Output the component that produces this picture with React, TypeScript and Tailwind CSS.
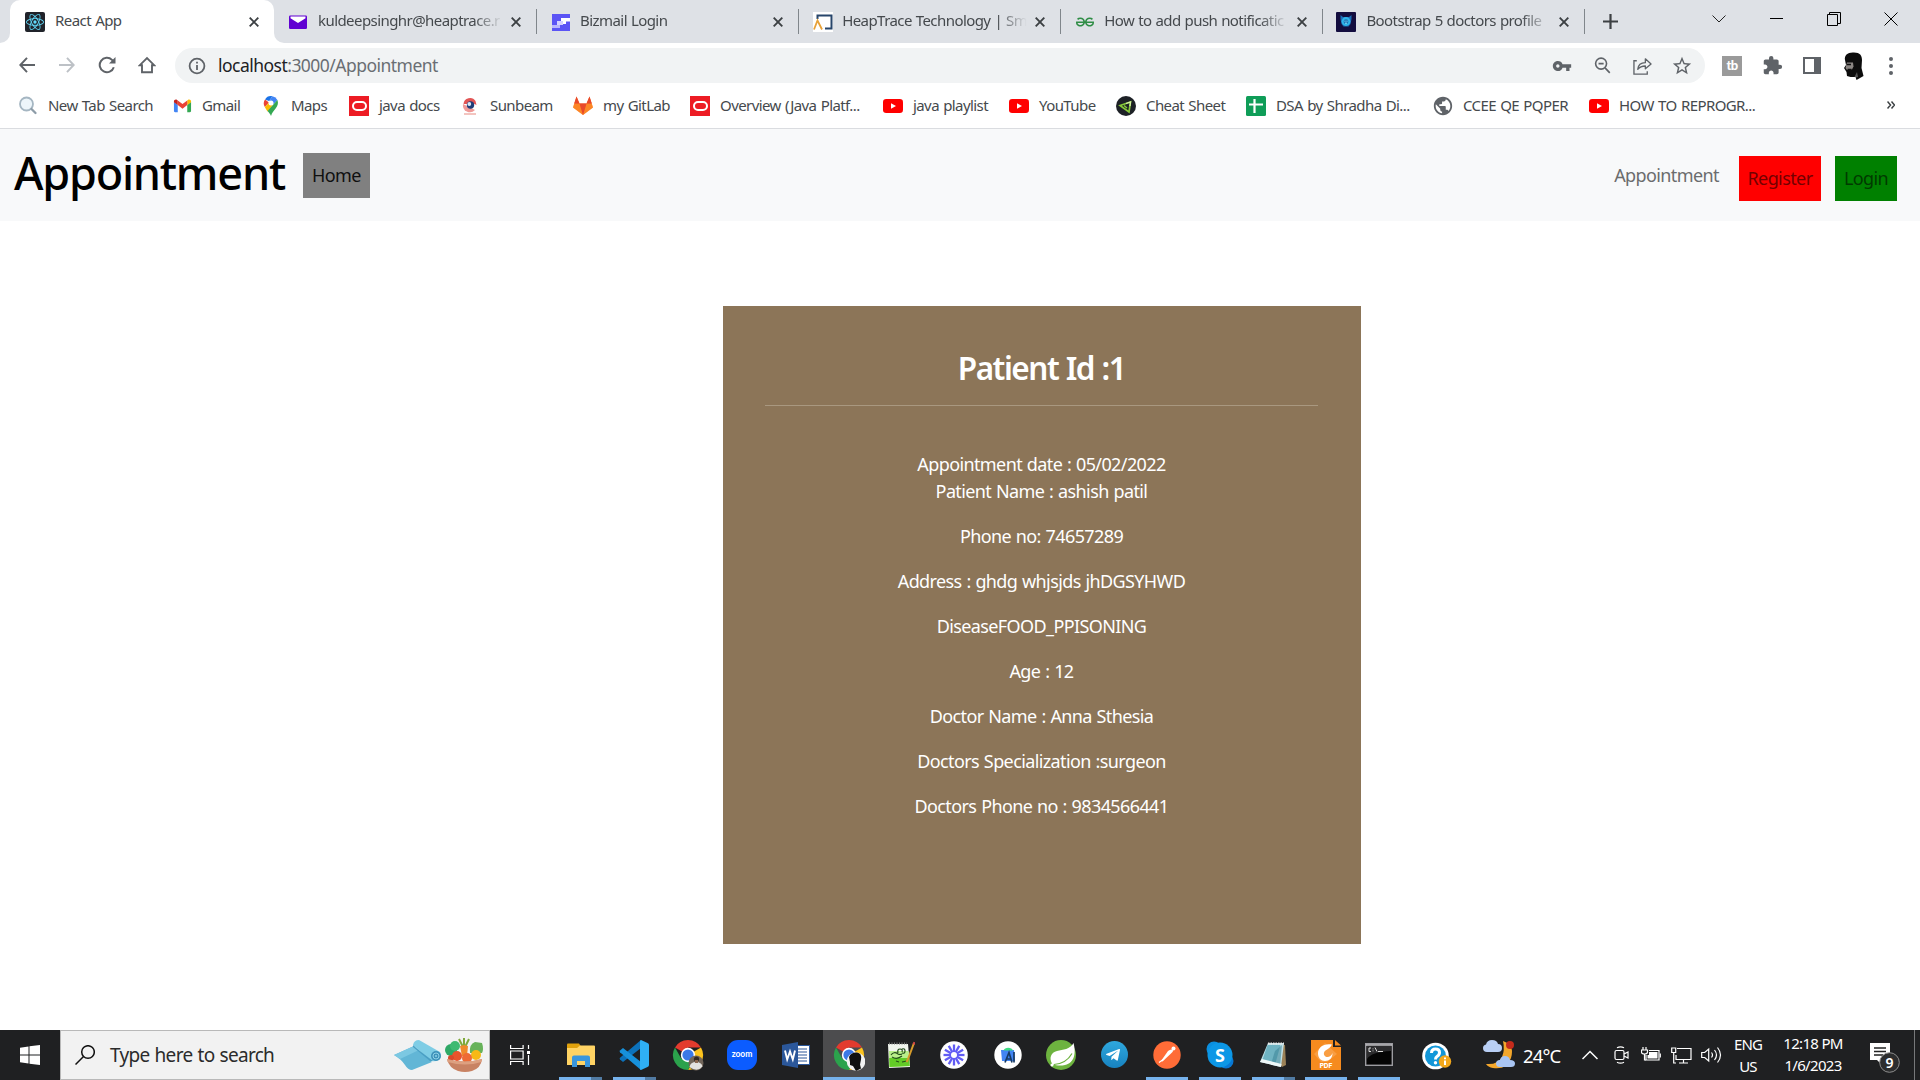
import type { ReactNode } from 'react';
import { SiReact, SiGeeksforgeeks } from 'react-icons/si';
import { FaTelegramPlane } from 'react-icons/fa';
import { MdVpnKey, MdExtension, MdStarBorder, MdPublic } from 'react-icons/md';

/* ---------- favicons ---------- */

const ReactFav = () => (
  <span className="flex size-5 items-center justify-center rounded-[2px] bg-[#20232a] text-[#61dafb]">
    <SiReact className="size-[18px]" />
  </span>
);

const MailFav = () => (
  <svg className="size-5" viewBox="0 0 20 20">
    <rect x="1" y="3.5" width="18" height="13.5" rx="1.2" fill="#6001d2" />
    <path d="M2.5 4.5h15v1.8L10 11 2.5 6.300z" fill="#fff" />
  </svg>
);

const BizmailFav = () => (
  <svg className="ml-px size-5" viewBox="0 0 20 20">
    <rect x="1" y="2" width="18" height="17" fill="#5b54f5" />
    <path d="M10 6h9v3.500h-4V12h-5z" fill="#fff" />
    <path d="M6 9h6v4H6z" fill="#d4d1ff" />
    <path d="M1 13h8v3H1z" fill="#b9b5fc" />
  </svg>
);

const HeapFav = () => (
  <svg className="ml-px size-5" viewBox="0 0 20 20">
    <rect width="20" height="20" fill="#fff" />
    <path d="M4.500 7V3.500h14V16.500H12" fill="none" stroke="#27456b" strokeWidth="2" />
    <path d="M1 17.500 4.500 8.500 9 17.500" fill="none" stroke="#e7a23a" strokeWidth="1.800" />
  </svg>
);

const BootFav = () => (
  <svg className="size-5" viewBox="0 0 20 20">
    <rect width="20" height="20" rx="1" fill="#130d3f" />
    <path d="M4.500 3l2.500 2h6l2.500-2v4l-1 5-2 2.500H7.500L5.500 12l-1-5z" fill="#1d6fb8" />
    <circle cx="10" cy="9.500" r="4.400" fill="#2fb4ea" />
    <circle cx="10" cy="9.700" r="2.400" fill="#1b6fb5" />
    <path d="M8.500 9.200h1M10.500 9.200h1M9 11.200h2" stroke="#8fe6ff" strokeWidth="1" />
  </svg>
);

const SearchFav = () => (
  <svg className="size-5" viewBox="0 0 20 20" fill="none">
    <circle cx="8.500" cy="8" r="6.500" fill="#edf5fa" stroke="#a5b6c2" strokeWidth="1.800" />
    <path d="M13.500 13l4 4" stroke="#8d9ca8" strokeWidth="2.300" strokeLinecap="round" />
  </svg>
);

const GmailFav = () => (
  <svg className="ml-px size-5" viewBox="0 0 20 20">
    <path d="M1 5.500v9.800c0 .7.500 1.200 1.200 1.200H5V9z" fill="#4285f4" />
    <path d="M19 5.500v9.800c0 .7-.5 1.200-1.200 1.200H15V9z" fill="#34a853" />
    <path d="M1 5.200C1 3.500 3 2.700 4.300 3.700L5 4.200V9L1 6z" fill="#c5221f" />
    <path d="M19 5.200c0-1.700-2-2.500-3.300-1.500l-.7.500V9l4-3z" fill="#fbbc04" />
    <path d="M5 4.200l5 3.800 5-3.800V9l-5 3.800L5 9z" fill="#ea4335" />
  </svg>
);

const MapsFav = () => (
  <svg className="size-5" viewBox="0 0 20 20">
    <path d="M4 3.500A7 7 0 0 1 11.500.300L8 5z" fill="#1a73e8" />
    <path d="M4 3.500 8 6.500 3.800 11A7 7 0 0 1 4 3.500z" fill="#ea4335" />
    <path d="M11.500.3A7 7 0 0 1 16.400 4L12 9 8 5z" fill="#4285f4" />
    <path d="M3.800 11 8 6.500 12 9l-5.500 6.500C5.500 14 4.600 12.700 3.800 11z" fill="#fbbc04" />
    <path d="M16.400 4c1.200 3 .4 5.600-1.600 8.200C12.500 15 11 16.500 10 20c-.8-2.200-1.800-3-3.500-5z" fill="#34a853" />
    <circle cx="10" cy="7" r="2.500" fill="#fff" />
  </svg>
);

const OracleFav = () => (
  <span className="flex size-5 items-center justify-center bg-[#ed1c24]">
    <span className="h-[10px] w-[15px] rounded-full border-2 border-white" />
  </span>
);

const SunbeamFav = () => (
  <svg className="size-5" viewBox="0 0 20 20">
    <path d="M3.500 8a6.500 6.500 0 0 1 12-3l1 4-4-2-5 1z" fill="#e25454" />
    <path d="M3 8a7 7 0 0 0 12 6L9 11z" fill="#ef9a98" />
    <circle cx="10.500" cy="9" r="3.700" fill="#1f3d78" />
    <circle cx="9.300" cy="8" r="1.900" fill="#dbe6f5" />
    <path d="M4 18h12" stroke="#f0b6b0" strokeWidth="1.600" />
  </svg>
);

const GitlabFav = () => (
  <svg className="size-[22px] -mx-px" viewBox="0 0 22 22">
    <path d="M11 20 1 12.500 4.500 1.500 7.500 8.500h7l3-7L21 12.500z" fill="#fc6d26" />
    <path d="M11 20 1 12.500l1.200-4 5.300 0zM11 20l10-7.500-1.200-4-5.300 0z" fill="#fca326" opacity=".45" />
    <path d="M11 20 7.500 8.500h7zM4.500 1.500l3 7H2.200zM17.500 1.500l-3 7h5.300z" fill="#e8492a" />
  </svg>
);

const YoutubeFav = () => (
  <svg className="size-5" viewBox="0 0 20 20">
    <rect y="3" width="20" height="14" rx="3.200" fill="#f00" />
    <path d="M8 7.200v5.600l5-2.800z" fill="#fff" />
  </svg>
);

const CheatFav = () => (
  <svg className="size-5" viewBox="0 0 20 20">
    <circle cx="10" cy="10" r="10" fill="#1d2126" />
    <path d="M4 9.500 14.500 6 13 16z" fill="none" stroke="#86c93a" strokeWidth="1.700" />
    <path d="M8 9.500l3 2.500" stroke="#86c93a" strokeWidth="1.500" />
    <path d="M10 7.500 14.500 6 14 10" fill="none" stroke="#d6f0a5" strokeWidth="1.300" />
  </svg>
);

const SheetFav = () => (
  <svg className="size-5" viewBox="0 0 20 20">
    <rect width="20" height="20" rx="1.500" fill="#0f9d58" />
    <path d="M8.500 3v14M3 8.500h14" stroke="#fff" strokeWidth="2.200" />
  </svg>
);

/* ---------- browser chrome ---------- */

const CloseX = () => (
  <svg className="size-[10px] shrink-0" viewBox="0 0 10 10" stroke="#3c4043" strokeWidth="1.900">
    <path d="M.7.7l8.600 8.600M9.300.7L.7 9.300" />
  </svg>
);

const tabs: { icon: ReactNode; title: string }[] = [
  { icon: <MailFav />, title: 'kuldeepsinghr@heaptrace.r' },
  { icon: <BizmailFav />, title: 'Bizmail Login' },
  { icon: <HeapFav />, title: 'HeapTrace Technology | Sm' },
  { icon: <SiGeeksforgeeks className="ml-[2px] mt-px size-[18px] text-[#2f8d46]" />, title: 'How to add push notificatic' },
  { icon: <BootFav />, title: 'Bootstrap 5 doctors profile' },
];

const TabStrip = () => (
  <div className="flex h-[43px] shrink-0 bg-[#dee1e6] text-[15px] text-[#45494d]">
    <div className="flex w-[10px] items-end">
      <div className="size-[10px] bg-white">
        <div className="size-full rounded-br-[10px] bg-[#dee1e6]" />
      </div>
    </div>
    <div className="flex w-[264px] items-center rounded-t-[10px] bg-white pl-[15px] pr-[15px]">
      <ReactFav />
      <span className="mb-[2px] ml-[10px] flex-1 tracking-[-0.037em] [word-spacing:0.05em]">React App</span>
      <CloseX />
    </div>
    <div className="flex w-[10px] items-end">
      <div className="size-[10px] bg-white">
        <div className="size-full rounded-bl-[10px] bg-[#dee1e6]" />
      </div>
    </div>
    {tabs.map((t, i) => (
      <div key={i} className="flex w-[262.100px] shrink-0 items-center pl-[4px]">
        <span className="size-5 shrink-0">{t.icon}</span>
        <span className="mb-[2px] ml-[10px] w-[185px] shrink-0 whitespace-nowrap tracking-[-0.038em] [mask-image:linear-gradient(to_right,black_84%,transparent)] [word-spacing:0.04em]">
          {t.title}
        </span>
        <span className="ml-[8px]">
          <CloseX />
        </span>
        <span className="ml-[15px] h-[25px] w-px shrink-0 bg-[#80868b]" />
      </div>
    ))}
    <div className="flex w-[24px] items-center justify-end">
      <svg className="size-[15px]" viewBox="0 0 15 15" stroke="#3c4043" strokeWidth="2.200">
        <path d="M7.500 0v15M0 7.500h15" />
      </svg>
    </div>
    <div className="ml-auto flex h-[37px] w-[230px] items-center">
      <span className="flex w-[58px] justify-center">
        <svg className="h-2 w-[14px]" viewBox="0 0 14 8" fill="none" stroke="#222" strokeWidth="1">
          <path d="M.5.500 7 7l6.500-6.500" />
        </svg>
      </span>
      <span className="flex w-[57px] justify-center">
        <span className="h-px w-[13px] bg-black" />
      </span>
      <span className="flex w-[57px] justify-center">
        <svg className="size-[14px]" viewBox="0 0 14 14" fill="none" stroke="#000" strokeWidth="1">
          <path d="M.5 2.500h10v11H.5zM2.500 2.500v-2h11V11.500h-3" />
        </svg>
      </span>
      <span className="flex w-[57px] justify-center">
        <svg className="size-[14px]" viewBox="0 0 14 14" stroke="#000" strokeWidth="1">
          <path d="M.5.5l13 13M13.500.5L.5 13.500" />
        </svg>
      </span>
    </div>
  </div>
);

const Slot = ({ children, className = '' }: { children: ReactNode; className?: string }) => (
  <span className={`flex w-10 shrink-0 items-center justify-center ${className}`}>{children}</span>
);

const Toolbar = () => (
  <div className="flex h-[45px] shrink-0 items-center bg-white pl-[7px]">
    <Slot className="pb-[2px]">
      <svg className="size-4" viewBox="0 0 18 18" fill="none" stroke="#5f6368" strokeWidth="2.200">
        <path d="M18 9H2M9 1 1.500 9 9 17" />
      </svg>
    </Slot>
    <Slot className="pb-[2px]">
      <svg className="size-4" viewBox="0 0 18 18" fill="none" stroke="#bdc1c6" strokeWidth="2.200">
        <path d="M0 9H16M9 1 16.500 9 9 17" />
      </svg>
    </Slot>
    <Slot className="pb-px">
      <svg className="size-[18px]" viewBox="0 0 18 18" fill="none" stroke="#5f6368" strokeWidth="2">
        <path d="M15.800 11.200A7.200 7.200 0 1 1 14 3.900L16 6" />
        <path d="M17.500 1v6.500H11z" fill="#5f6368" stroke="none" />
      </svg>
    </Slot>
    <Slot className="pb-px">
      <svg className="size-[18px]" viewBox="0 0 18 18" fill="none" stroke="#5f6368" strokeWidth="1.900">
        <path d="M1.800 9.200H4v7h10v-7h2.200L9 2z" />
      </svg>
    </Slot>
    <div className="ml-[8px] flex h-[35px] w-[1530px] items-center rounded-full bg-[#f1f3f4] pl-[13px]">
      <svg className="size-[18px]" viewBox="0 0 18 18" fill="none" stroke="#5f6368" strokeWidth="1.800">
        <circle cx="9" cy="9" r="7.400" />
        <path d="M9 8v5M9 4.700v1.900" />
      </svg>
      <span className="ml-[12px] flex-1 text-[17.500px] tracking-[-0.030em] text-[#6a6e73]">
        <span className="text-[#202124]">localhost</span>:3000/Appointment
      </span>
      <Slot>
        <MdVpnKey className="size-[20px] text-[#5f6368]" />
      </Slot>
      <Slot>
        <svg className="size-[17px]" viewBox="0 0 18 18" fill="none" stroke="#5f6368" strokeWidth="1.700">
          <circle cx="7.500" cy="7" r="5.800" />
          <path d="M11.700 11.500l5 5.300M4.800 7h5.400" />
        </svg>
      </Slot>
      <Slot>
        <svg className="ml-px size-[19px]" viewBox="0 0 20 20" fill="none" stroke="#5f6368" strokeWidth="1.400">
          <path d="M4 5H1v14h14v-3" />
          <path d="M5 14c.5-5 3-7 8-7V3l6 5.500-6 5V10.500c-4 0-6 1-8 3.500z" strokeLinejoin="round" />
        </svg>
      </Slot>
      <Slot className="mr-[3px]">
        <MdStarBorder className="size-[22px] text-[#5f6368]" />
      </Slot>
    </div>
    <Slot className="ml-[7px]">
      <span className="flex size-5 items-center justify-center bg-[#9a9a9a] pb-px font-['Lato'] text-[13px] font-black leading-none tracking-[-0.05em] text-white">
        tb
      </span>
    </Slot>
    <Slot>
      <MdExtension className="size-[21px] text-[#5f6368]" />
    </Slot>
    <Slot>
      <span className="h-[17px] w-[18px] border-2 border-r-[7px] border-[#5f6368] bg-white" />
    </Slot>
    <Slot className="ml-[2px]">
      <svg className="h-[28px] w-[20px]" viewBox="0 0 20 28">
        <path d="M1 8C0 3 4 0 10 .5c6 0 8 3 8 7.500l-.5 8 2 8-7 4-1-3-5 0-3.500-1-.5-4-2.500-4 2-3z" fill="#0c0c0c" />
        <path d="M3 10.500l6 0 .5 4-1.500 3-5 .5-1.500-2z" fill="#8b8683" />
        <path d="M3 12.500h4M3.500 17.500h4" stroke="#111" strokeWidth="1.400" />
        <path d="M10 26l3-6 1 5z" fill="#d9d9d9" opacity=".35" />
      </svg>
    </Slot>
    <span className="ml-[15px] flex flex-col gap-[3px]">
      <span className="size-1 rounded-full bg-[#5f6368]" />
      <span className="size-1 rounded-full bg-[#5f6368]" />
      <span className="size-1 rounded-full bg-[#5f6368]" />
    </span>
  </div>
);

const bookmarks: { icon: ReactNode; label: string; width: string }[] = [
  { icon: <SearchFav />, label: 'New Tab Search', width: 'w-[154px]' },
  { icon: <GmailFav />, label: 'Gmail', width: 'w-[89px]' },
  { icon: <MapsFav />, label: 'Maps', width: 'w-[88px]' },
  { icon: <OracleFav />, label: 'java docs', width: 'w-[111px]' },
  { icon: <SunbeamFav />, label: 'Sunbeam', width: 'w-[113px]' },
  { icon: <GitlabFav />, label: 'my GitLab', width: 'w-[117px]' },
  { icon: <OracleFav />, label: 'Overview (Java Platf...', width: 'w-[193px]' },
  { icon: <YoutubeFav />, label: 'java playlist', width: 'w-[126px]' },
  { icon: <YoutubeFav />, label: 'YouTube', width: 'w-[107px]' },
  { icon: <CheatFav />, label: 'Cheat Sheet', width: 'w-[130px]' },
  { icon: <SheetFav />, label: 'DSA by Shradha Di...', width: 'w-[187px]' },
  { icon: <MdPublic className="size-[22px] -mx-px text-[#5f6368]" />, label: 'CCEE QE PQPER', width: 'w-[156px]' },
  { icon: <YoutubeFav />, label: 'HOW TO REPROGR...', width: 'w-[200px]' },
];

const BookmarkBar = () => (
  <div className="flex h-[41px] shrink-0 items-center border-b border-[#dadce0] bg-white pb-[4px] pl-[18px] text-[15px] tracking-[-0.039em] text-[#45494d] [word-spacing:0.06em]">
    {bookmarks.map((b) => (
      <div key={b.label} className={`flex shrink-0 items-center whitespace-nowrap ${b.width}`}>
        <span className="flex size-5 shrink-0 items-center">{b.icon}</span>
        <span className="mb-[2px] ml-[10px]">{b.label}</span>
      </div>
    ))}
    <svg className="ml-auto mr-[25px] mb-[2px] h-2 w-2" viewBox="0 0 8 8" fill="none" stroke="#3c4043" strokeWidth="1.500">
      <path d="M.5.500 3.500 4l-3 3.500M4.500.500l3 3.500-3 3.500" />
    </svg>
  </div>
);

/* ---------- page ---------- */

const NavBar = () => (
  <nav className="flex h-[92px] shrink-0 items-center bg-[#f8f9fa] text-[18px] tracking-[-0.033em]">
    <h1 className="mb-[5px] ml-[14px] w-[289px] text-[45px] font-medium leading-none tracking-[-0.027em] text-black">Appointment</h1>
    <a className="mt-px flex h-[45px] w-[67px] items-center justify-center bg-[#808080] text-[#0f0f0f]">Home</a>
    <a className="ml-auto flex h-[45px] items-center pt-px text-[#6b6c6d]">Appointment</a>
    <a className="ml-[20px] mt-[7px] flex h-[45px] w-[82px] items-center justify-center bg-[#ff0000] text-[#730000]">Register</a>
    <a className="ml-[14px] mr-[23px] mt-[7px] flex h-[45px] w-[62px] items-center justify-center bg-[#008000] text-[#003a00]">Login</a>
  </nav>
);

const details = [
  'Phone no: 74657289',
  'Address : ghdg whjsjds jhDGSYHWD',
  'DiseaseFOOD_PPISONING',
  'Age : 12',
  'Doctor Name : Anna Sthesia',
  'Doctors Specialization :surgeon',
  'Doctors Phone no : 9834566441',
];

const PatientCard = () => (
  <section className="ml-[723px] mt-[85px] flex h-[638px] w-[638px] flex-col items-center bg-[#8c7558] pl-[42px] pr-[43px] pt-[43px] text-[18px] leading-[27px] tracking-[-0.034em] text-white [word-spacing:0.04em]">
    <h3 className="text-[31.500px] font-semibold leading-[38px] tracking-[-0.047em]">Patient Id :1</h3>
    <hr className="mt-[18px] w-full border-0 border-t border-[#a99880]" />
    <p className="mt-[45px]">Appointment date : 05/02/2022</p>
    <p className="mb-[18px]">Patient Name : ashish patil</p>
    {details.map((d) => (
      <p key={d} className="mb-[18px]">
        {d}
      </p>
    ))}
  </section>
);

/* ---------- taskbar ---------- */

const Explorer = () => (
  <svg className="h-6 w-7" viewBox="0 0 28 24">
    <path d="M0 1.500Q0 .5 1 .5h11l2 3-3 3H0z" fill="#e0a10c" />
    <path d="M0 5h10l3-2.500h14q1 0 1 1V22H0z" fill="#ffd364" />
    <path d="M5 24v-9.500q0-2 2-2h14q2 0 2 2V24h-5v-6h-8v6z" fill="#3a96dd" />
  </svg>
);

const VsCode = () => (
  <svg className="size-[30px]" viewBox="0 0 30 30">
    <path d="M22 0v8L4 22l-3-2.500q-.8-1 0-1.800z" fill="#0c72bb" />
    <path d="M22 30v-8L4 8 1 10.500q-.8 1 0 1.800z" fill="#1791dc" />
    <path d="M22 0l6.500 3Q30 3.700 30 5v20q0 1.300-1.500 2L22 30q-1 0-1-1.500v-27Q21 0 22 0z" fill="#2fb0f5" />
  </svg>
);

const Chrome = ({ light }: { light?: boolean }) => (
  <svg className="size-[32px]" viewBox="0 0 32 32">
    <g transform="translate(1 1)">
      <path d="M15 15 2 7.500A15 15 0 0 1 28 7.500H15z" fill="#e33b2e" />
      <path d="M15 15 28 7.500A15 15 0 0 1 15 30l6.500-11z" fill="#fcc31e" />
      <path d="M15 15l6.500 4L15 30A15 15 0 0 1 2 7.500L8.500 19z" fill="#2ba24c" />
      <circle cx="15" cy="15" r="7.200" fill="#fff" />
      <circle cx="15" cy="15" r="5.600" fill="#3b78e7" />
    </g>
    {light ? (
      <g>
        <circle cx="23" cy="22.500" r="9.300" fill="#f3f3f3" />
        <path d="M16 18q2-5 8-4.500 5 .5 4 7l-1 5 1 4-5 2.500-3-5-3-1 0-3z" fill="#101010" />
      </g>
    ) : (
      <g>
        <circle cx="24" cy="24" r="7.500" fill="#71655a" />
        <path d="M17.500 28q1-5 6.500-5t6.500 4.500q-5 6-13 .5z" fill="#e3e1df" />
        <circle cx="24.500" cy="20" r="2.600" fill="#332822" />
        <path d="M23 21h3v3h-3z" fill="#8a6650" />
      </g>
    )}
  </svg>
);

const ZoomApp = () => (
  <span className="flex size-[30px] items-center justify-center rounded-[11px] bg-[#0b5cff] pb-px font-['Lato'] text-[8.500px] font-bold leading-none text-white">
    zoom
  </span>
);

const Word = () => (
  <svg className="h-[28px] w-7" viewBox="0 0 28 28">
    <rect x="13" y="4.500" width="14.500" height="19" fill="#fff" stroke="#2b579a" />
    <path d="M15 8h10M15 11h10M15 14h10M15 17h10M15 20h10" stroke="#2b579a" strokeWidth="1.200" />
    <path d="M0 4 16 1v26L0 24z" fill="#2b579a" />
    <path d="M3 9.500l2.200 9L8 10.500l2.800 8 2.200-9" fill="none" stroke="#fff" strokeWidth="1.900" />
  </svg>
);

const NotepadPlus = () => (
  <svg className="h-7 w-[28px]" viewBox="0 0 28 28">
    <path d="M1 3h20l2 23-21 1z" fill="#f1f5ee" />
    <path d="M2 10h19.500l1.200 15L2.500 26z" fill="#b9ef8a" />
    <path d="M2.200 17h20l.5 8L2.500 26z" fill="#63cc27" />
    <path d="M2 2.500h18" stroke="#777" strokeWidth="2" strokeDasharray="1 1.500" />
    <path
      d="M4 14q3-4 7-1 2 1 4 0M5 16q5 3 10-1M11 12q-1-4 2-4t2 3M15 8q3-1 3 2t-3 2M9 20l3 1M15 21l5-1"
      fill="none"
      stroke="#244d1b"
      strokeWidth="1.200"
    />
    <path d="M27 2 21 18l-1.500 3" stroke="#d69b2b" strokeWidth="2" />
    <path d="M27.500 1l-.8 2.500" stroke="#d34848" strokeWidth="2.200" />
  </svg>
);

const Loom = () => (
  <svg className="size-[28px]" viewBox="-14 -14 28 28">
    <circle r="13.800" fill="#fff" />
    {[0, 30, 60, 90, 120, 150, 180, 210, 240, 270, 300, 330].map((a) => (
      <path key={a} d="M0-3.500v-7" transform={`rotate(${a})`} stroke="#625df5" strokeWidth="2.300" />
    ))}
    <circle r="3.800" fill="none" stroke="#625df5" strokeWidth="1.600" />
  </svg>
);

const Android = () => (
  <svg className="size-[28px]" viewBox="0 0 28 28">
    <circle cx="14" cy="14" r="13.700" fill="#fff" />
    <path d="M7 9h13l1 11H8z" fill="#4285f4" />
    <path d="M9.500 9.500a5 4 0 0 1 9.500 0z" fill="#3ddc84" />
    <path d="M11 21.500 15 11.500l3 10M12.500 18h4.500M20 11v10.500" fill="none" stroke="#173a63" strokeWidth="1.700" />
  </svg>
);

const Spring = () => (
  <svg className="size-[30px]" viewBox="0 0 30 30">
    <circle cx="15" cy="15" r="15" fill="#6db33f" />
    <path
      d="M27.500 3C30 12 29 23 19 25c-5 1-9 .3-12.500-.5C2.500 18 5 12.500 11 11c6-1.400 13-1.500 16.500-8z"
      fill="#fff"
    />
    <path d="M8 24.500c7-.5 14-4 18-11" fill="none" stroke="#6db33f" strokeWidth="1.200" />
    <circle cx="6" cy="25" r="1.500" fill="#fff" />
  </svg>
);

const Telegram = () => (
  <span className="flex size-[27px] items-center justify-center rounded-full bg-linear-to-b from-[#2fa8de] to-[#1782c0] text-white">
    <FaTelegramPlane className="mr-[2px] size-[16px]" />
  </span>
);

const Postman = () => (
  <svg className="size-[28px]" viewBox="0 0 28 28">
    <circle cx="14" cy="14" r="13.700" fill="#ff6c37" />
    <path d="M8 20 15 10q3-2.500 5-1 .5 1.500-2 3.500L9.500 20.500z" fill="#fff" />
    <circle cx="20.500" cy="7.500" r="2" fill="#fff" />
    <path d="M6 21.500l5-3.500" stroke="#fff" strokeWidth="1.200" />
  </svg>
);

const Skype = () => (
  <svg className="size-[28px]" viewBox="0 0 28 28">
    <circle cx="8" cy="8" r="7.500" fill="#0a8fe0" />
    <circle cx="20" cy="20" r="7.500" fill="#0878d4" />
    <circle cx="14" cy="14" r="12.500" fill="#0c97e6" />
    <text x="14" y="20.500" textAnchor="middle" fontFamily="Noto Sans" fontWeight="700" fontSize="18" fill="#fff">
      S
    </text>
  </svg>
);

const Notepad = () => (
  <svg className="size-[28px]" viewBox="0 0 28 28">
    <path d="M9 2 26 4l1 20-4 2z" fill="#9b8157" />
    <path d="M9 2h16l-3 24L1 21z" fill="#bfe0e6" />
    <path d="M8.500 4h13l-5 18L3 20z" fill="#6fb3c2" />
    <path d="M16 10l7-6-2 21-9-2z" fill="#3f8799" opacity=".6" />
    <path d="M1 21l21 5 .5-3L3 18z" fill="#eef7f8" />
    <path d="M9 2.500h16" stroke="#e9e9e9" strokeWidth="2" strokeDasharray="1.500 1" />
  </svg>
);

const Foxit = () => (
  <svg className="size-[30px]" viewBox="0 0 30 30">
    <path d="M0 0h22v7h8v23H0z" fill="#f68b1f" />
    <path d="M24 0l6 5.500h-6z" fill="#f68b1f" />
    <path d="M3 14 14 3l12 11-10 8H10z" fill="#fbb266" opacity=".5" />
    <path
      d="M21 4.500C13 3 7 7 7 13.500 7 18 10 21 14 21c4.500 0 7.500-3 7.500-8-1 3-3.500 4.500-6 4-3-1-3.500-4.500-1-6.500 2-1.500 5-2.500 6.500-6z"
      fill="#fff"
    />
    <text x="15" y="28" textAnchor="middle" fontFamily="Inter" fontWeight="800" fontSize="6.500" fill="#fff">
      PDF
    </text>
  </svg>
);

const Cmd = () => (
  <svg className="h-[23px] w-7" viewBox="0 0 28 23">
    <rect x=".7" y=".7" width="26.600" height="21.600" fill="#050505" stroke="#9c9ca1" strokeWidth="1.400" />
    <path d="M1 2h26" stroke="#c8c8cc" strokeWidth="1.500" />
    <path d="M2 3h24v5Q6 9 2 16z" fill="#2c2c2e" />
    <path d="M6 5H4v3.500h2M8 5.500v.8M8 7.500v.8M10 4.500l2 4M13 8.500h5" fill="none" stroke="#ddd" />
  </svg>
);

type App = { icon: ReactNode; cell: string; bar?: 'one' | 'many' | 'full' };

const apps: App[] = [
  { icon: <Explorer />, cell: 'w-[53px]', bar: 'many' },
  { icon: <VsCode />, cell: 'w-[54px]', bar: 'many' },
  { icon: <Chrome />, cell: 'w-[54px]' },
  { icon: <ZoomApp />, cell: 'w-[54px]' },
  { icon: <Word />, cell: 'w-[54px]' },
  { icon: <Chrome light />, cell: 'w-[52px] bg-[#4c4c4e]', bar: 'full' },
  { icon: <NotepadPlus />, cell: 'w-[52px]' },
  { icon: <Loom />, cell: 'w-[54px]' },
  { icon: <Android />, cell: 'w-[54px]' },
  { icon: <Spring />, cell: 'w-[52px]' },
  { icon: <Telegram />, cell: 'w-[54px]' },
  { icon: <Postman />, cell: 'w-[52px]', bar: 'one' },
  { icon: <Skype />, cell: 'w-[54px]', bar: 'one' },
  { icon: <Notepad />, cell: 'w-[52px]', bar: 'many' },
  { icon: <Foxit />, cell: 'w-[54px]', bar: 'one' },
  { icon: <Cmd />, cell: 'w-[52px]', bar: 'one' },
];

const AppCell = ({ icon, cell, bar }: App) => (
  <div className={`flex h-full shrink-0 flex-col items-center ${cell}`}>
    <div className="flex h-[47px] items-center pt-[2px]">{icon}</div>
    {bar === 'full' && <div className="h-[3px] w-full bg-[#76b2ec]" />}
    {bar === 'one' && <div className="h-[3px] w-[42px] bg-[#76b2ec]" />}
    {bar === 'many' && (
      <div className="flex h-[3px] w-[43px] bg-[#517ba3]">
        <div className="w-8 bg-[#76b2ec]" />
      </div>
    )}
  </div>
);

const Mat = () => (
  <svg className="h-[30px] w-[47px]" viewBox="0 0 47 30">
    <path d="M0 15 20 6 38 22 18 30q-4 0-7-5-4-6-11-10z" fill="#62b6d6" />
    <path d="M0 15 20 6l5 4L6 19z" fill="#7cc8e2" />
    <path d="M19 5q1-5 6-5l21 12q2 4-1 8-4 2-8 1z" fill="#7fcde5" />
    <path d="M19 5l3 3 17 13h-3L19 7z" fill="#4a9fc4" />
    <circle cx="42" cy="16" r="5" fill="#3f92ba" />
    <circle cx="42" cy="16" r="3" fill="none" stroke="#8dd0e6" />
    <circle cx="42" cy="16" r="1" fill="#8dd0e6" />
  </svg>
);

const Basket = () => (
  <svg className="h-[34px] w-[39px]" viewBox="0 0 39 34">
    <circle cx="6" cy="12" r="6" fill="#2fa866" />
    <circle cx="10" cy="8" r="5" fill="#3fba72" />
    <path d="M25 15q-1-9 5-11l7 1q2 6 0 10z" fill="#67b25a" />
    <path d="M14 1l4 8M19 0v9M24 1l-4 8" stroke="#7fa93c" strokeWidth="2" />
    <path d="M15 8l4-1 4 1-1 10h-5z" fill="#f08a2c" />
    <circle cx="31" cy="17" r="5" fill="#f7b916" />
    <circle cx="12" cy="18" r="5" fill="#e8542c" />
    <circle cx="22" cy="20" r="5" fill="#ee6a35" />
    <circle cx="6" cy="20" r="3" fill="#d9482a" />
    <path d="M2 21q17 5 35 0-1 9-10 12-7 2-14 0-9-3-11-12z" fill="#c88263" />
    <path d="M2 21q17 5 35 0l-.6 3q-16 5-33.800 0z" fill="#dda080" />
  </svg>
);

const Help = () => (
  <svg className="size-[30px]" viewBox="0 0 30 30">
    <circle cx="13.500" cy="14" r="13.300" fill="#fff" />
    <circle cx="13.500" cy="14" r="10.500" fill="#1296d8" />
    <path d="M9.500 11q0-4 4-4t4 3.500q0 2.500-2.500 4-1.500 1-1.500 3" fill="none" stroke="#fff" strokeWidth="3" />
    <circle cx="13.500" cy="20.800" r="1.700" fill="#fff" />
    <circle cx="23" cy="19.500" r="6.200" fill="#f2a71b" />
    <path d="M23 18.500v4.500M23 15.500v1.800" stroke="#fff" strokeWidth="2" />
  </svg>
);

const Weather = () => (
  <svg className="h-[30px] w-[32px]" viewBox="0 0 32 30">
    <path d="M20 1q12 4 8 17-4 12-18 10-5-1-7-4 12 1 16-7 3-7 1-16z" fill="#f4a72c" />
    <path d="M4 12q-4 0-4-4 0-3 3-3.500Q4 0 9 0t6 4q4 0 4 4t-4 4z" fill="#b9cff5" />
    <circle cx="27" cy="5" r="4" fill="#c42b1c" />
    <path d="M17 27q-4 0-4-3.500t4-3.500q1-4 5-4t5 4q5 0 5 3.500t-4 3.500z" fill="#a9c5f3" />
  </svg>
);

const Tray = () => (
  <div className="flex h-full flex-1 items-center text-white">
    <span className="ml-[17px] mt-[4px]">
      <Help />
    </span>
    <span className="ml-[31px]">
      <Weather />
    </span>
    <span className="ml-[8px] mt-[2px] w-[59px] text-[18.500px] tracking-[-0.045em]">24°C</span>
    <svg className="h-[10px] w-4" viewBox="0 0 16 10" fill="none" stroke="#fff" strokeWidth="1.500">
      <path d="M.500 9 8 1.500 15.500 9" />
    </svg>
    <svg className="ml-[16px] h-[18px] w-[15px]" viewBox="0 0 15 18" fill="none" stroke="#fff" strokeWidth="1.200">
      <rect x="1" y="4.500" width="9" height="9" rx="1.500" />
      <path d="M10 8l4-2v6l-4-2M3 1.800Q6.500-.2 10 1.800M3 16.200q3.500 2 7 0" />
    </svg>
    <svg className="ml-[12px] h-[16px] w-[20px]" viewBox="0 0 20 16" fill="none" stroke="#fff" strokeWidth="1.200">
      <path d="M2 0v3M5 0v3M.500 3h6v2q0 2-3 2t-3-2zM3.500 7v6h1.500" />
      <path d="M8 3.500h10v9.500H5V8" />
      <path d="M8 5h8.500v6.500h-10V8H8z" fill="#fff" stroke="none" />
      <path d="M19.300 6.500v4" />
    </svg>
    <svg className="ml-[10px] h-[17px] w-[21px]" viewBox="0 0 21 17" fill="none" stroke="#fff" strokeWidth="1.200">
      <path d="M6 1.500h14v11H5V8M12.500 12.500V16M8 16h9M.700 1h4v4.500h-4zM2.700 5.500V16H5" />
    </svg>
    <svg className="ml-[9px] h-[18px] w-[21px]" viewBox="0 0 21 18" fill="none" stroke="#fff" strokeWidth="1.200">
      <path d="M.700 6.500h3l4-3.500v12l-4-3.500h-3zM10.500 6.500q2 2.500 0 5M13.500 4q4 5 0 10M16.500 1.500q6 7.500 0 15" />
    </svg>
    <div className="mb-px ml-[6px] w-[40px] text-center text-[15px] leading-[22px] tracking-[-0.055em]">
      <div>ENG</div>
      <div>US</div>
    </div>
    <div className="mb-[2px] ml-[10px] w-[70px] whitespace-nowrap text-center text-[15px] leading-[22px] tracking-[-0.045em]">
      <div>12:18 PM</div>
      <div>1/6/2023</div>
    </div>
    <svg className="ml-[22px] mt-[5px] size-[30px]" viewBox="0 0 30 30">
      <path d="M0 0h20v17h-9v4l-4-4H0z" fill="#fff" />
      <path d="M4 5h12M4 8.500h12M4 12h9" stroke="#222" strokeWidth="1.300" />
      <circle cx="19.500" cy="19.500" r="9.800" fill="#2c2d2e" stroke="#8d8d8d" strokeWidth="1" />
      <text x="19.500" y="24.500" textAnchor="middle" fontFamily="Noto Sans" fontWeight="600" fontSize="14" fill="#fff">
        9
      </text>
    </svg>
    <span className="ml-auto mr-[5px] h-full w-px bg-[#77787a]" />
  </div>
);

const Taskbar = () => (
  <div className="mt-auto flex h-[50px] shrink-0 items-center bg-[#1f2022]">
    <div className="flex w-[60px] justify-center">
      <svg className="size-5" viewBox="0 0 20 20" fill="#fff">
        <path d="M0 2.700 8.500 1.500v8H0zM9.500 1.300 20 0v9.500H9.500zM0 10.500h8.500v8L0 17.300zM9.500 10.500H20V20L9.500 18.700z" />
      </svg>
    </div>
    <div className="flex h-[50px] w-[430px] items-center border border-[#b9b9b9] bg-[#f2f2f2] pl-[14px] pr-[5px]">
      <svg className="size-5" viewBox="0 0 20 20" fill="none" stroke="#111" strokeWidth="1.500">
        <circle cx="13" cy="7" r="6.300" />
        <path d="M8.500 11.500.500 19.500" />
      </svg>
      <span className="ml-[15px] flex-1 text-[19px] tracking-[-0.036em] text-[#2b2b2b] [word-spacing:0.04em]">Type here to search</span>
      <Mat />
      <span className="ml-[4px]">
        <Basket />
      </span>
    </div>
    <div className="flex w-[64px] justify-start pl-[20px]">
      <svg className="h-5 w-[21px]" viewBox="0 0 21 20" fill="none" stroke="#fff" strokeWidth="1.200">
        <path d="M.600 0v3.500h12.500V0M.600 20v-3.500h12.500V20M.600 6h12.500v8H.600zM18.500 0v4M18.500 10v10" />
        <rect x="17" y="6" width="3" height="3" fill="#fff" stroke="none" />
      </svg>
    </div>
    {apps.map((a, i) => (
      <AppCell key={i} {...a} />
    ))}
    <Tray />
  </div>
);

export default function App() {
  return (
    <div className="flex h-[1080px] w-[1920px] flex-col overflow-hidden bg-white font-['Noto_Sans',sans-serif]">
      <TabStrip />
      <Toolbar />
      <BookmarkBar />
      <NavBar />
      <PatientCard />
      <Taskbar />
    </div>
  );
}
